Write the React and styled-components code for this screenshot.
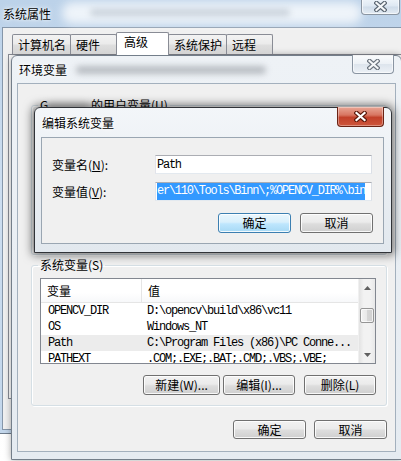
import React from 'react';
import styled, { createGlobalStyle } from 'styled-components';

const CJK = `"Noto Sans CJK SC", "Noto Sans", sans-serif`;
const MONO = `"Liberation Mono", "DejaVu Sans Mono", monospace`;

const GlobalStyle = createGlobalStyle`
  html, body { margin: 0; padding: 0; }
  body { width: 401px; height: 461px; overflow: hidden; background: #fff; }
  *, *::before, *::after { box-sizing: border-box; }
`;

const Desktop = styled.div`
  position: relative;
  width: 401px;
  height: 461px;
  overflow: hidden;
  background: linear-gradient(180deg, #eef1f4 0%, #ffffff 100%);
  font-family: ${CJK};
  font-size: 12px;
  line-height: 14px;
  color: #000;
`;

const Smudge = styled.span`
  position: absolute;
  left: ${p => p.$x}px;
  top: ${p => p.$y}px;
  width: ${p => p.$w}px;
  height: ${p => p.$h}px;
  background: ${p => p.$c};
  border-radius: ${p => p.$h / 2}px;
  filter: blur(${p => p.$b}px);
  opacity: ${p => p.$o};
  pointer-events: none;
`;

/* ---------- outer window: 系统属性 ---------- */
const SysWindow = styled.div`
  position: absolute;
  left: 0;
  top: 0;
  width: 406px;
  height: 434px;
  display: flex;
  flex-direction: column;
  background: linear-gradient(180deg, #bcd2e9 0%, #cddef0 45%, #c2d6eb 100%);
  border-right: 1px solid #6d7c8c;
  border-bottom: 1px solid #6d7c8c;
`;

const TitleBar = styled.div`
  position: relative;
  flex: none;
  height: ${p => p.$h}px;
  display: flex;
  align-items: center;
  padding-left: ${p => p.$pl}px;
`;

const Caption = styled.span`
  position: relative;
  white-space: nowrap;
  text-shadow: 0 0 6px rgba(255, 255, 255, 0.95), 0 0 3px rgba(255, 255, 255, 0.9);
`;

const CaptionButton = styled.div`
  position: absolute;
  top: -1px;
  right: ${p => p.$right}px;
  width: ${p => p.$w}px;
  height: ${p => p.$h}px;
  display: flex;
  align-items: center;
  justify-content: center;
  border: 1px solid ${p => (p.$red ? '#6a2314' : '#8a95a2')};
  border-top: none;
  border-radius: 0 0 4px 4px;
  background: ${p =>
    p.$red
      ? 'linear-gradient(180deg, #e8a695 0%, #d87662 42%, #c2412a 55%, #cd573c 100%)'
      : 'linear-gradient(180deg, rgba(255,255,255,0.75) 0%, rgba(236,241,246,0.7) 48%, rgba(214,223,233,0.7) 52%, rgba(236,241,246,0.8) 100%)'};
  box-shadow: inset 0 0 0 1px rgba(255, 255, 255, ${p => (p.$red ? 0.35 : 0.6)});
`;

const SysClient = styled.div`
  flex: none;
  height: 403px;
  margin-left: 2px;
  border: 1px solid #8596a9;
  border-right: none;
  background: #f0f0f0;
  padding: 4px 0 0 5px;
  display: flex;
  flex-direction: column;
`;

const TabRow = styled.div`
  position: relative;
  z-index: 1;
  flex: none;
  height: 23px;
  margin-bottom: -1px;
  padding-left: 4px;
  display: flex;
  align-items: flex-end;
`;

const Tab = styled.div`
  flex: none;
  position: relative;
  z-index: ${p => (p.$active ? 2 : 1)};
  width: ${p => p.$w}px;
  height: ${p => (p.$active ? 23 : 20)}px;
  margin-left: ${p => p.$ml}px;
  margin-bottom: ${p => (p.$active ? 0 : 1)}px;
  padding: ${p => (p.$active ? '2px 0 0 7px' : '3px 0 0 5px')};
  border: 1px solid #898c95;
  border-bottom: none;
  border-radius: 2px 2px 0 0;
  background: ${p =>
    p.$active
      ? '#ffffff'
      : 'linear-gradient(180deg, #f3f3f3 0%, #ebebeb 45%, #dedede 55%, #d4d4d4 100%)'};
  white-space: nowrap;
`;

const TabPanel = styled.div`
  flex: none;
  height: 345px;
  margin-right: -10px;
  border: 1px solid #898c95;
  background: #ffffff;
`;

/* ---------- 环境变量 window ---------- */
const EnvWindow = styled.div`
  position: absolute;
  left: 11px;
  top: 55px;
  width: 391px;
  height: 405px;
  display: flex;
  flex-direction: column;
  border: 1px solid #737e8a;
  border-radius: 6px 6px 0 0;
  background: linear-gradient(180deg, #eef2f6 0%, #e5ebf1 100%);
  box-shadow: 0 0 7px rgba(0, 0, 0, 0.35);
`;

const EnvClient = styled.div`
  flex: none;
  height: 369px;
  margin: 0 5px;
  border: 1px solid #a3b0bd;
  background: #f0f0f0;
  padding: 14px 8px 0 13px;
  display: flex;
  flex-direction: column;
`;

const Group = styled.fieldset`
  flex: none;
  margin: ${p => p.$mt}px 0 0 0;
  padding: ${p => p.$pt}px 10px 10px 8px;
  min-width: 0;
  height: ${p => (p.$h ? `${p.$h}px` : 'auto')};
  border: 1px solid #d5dfe5;
  border-radius: 3px;
  box-shadow: inset 1px 1px 0 #ffffff, 1px 1px 0 #ffffff;
`;

const Legend = styled.legend`
  padding: 0 2px;
  margin-left: -2px;
  line-height: 14px;
  white-space: nowrap;
`;

const Hidden = styled.span`
  display: inline-block;
  width: 40px;
  height: 10px;
  vertical-align: middle;
  background: #b8b8b8;
  filter: blur(3px);
  opacity: 0.6;
`;

const GroupBody = styled.div`
  display: flex;
  flex-direction: column;
`;

const ListBox = styled.div`
  flex: none;
  height: 86px;
  border: 1px solid #828790;
  background: #ffffff;
  display: flex;
  overflow: hidden;
`;

const ListMain = styled.div`
  flex: 1;
  min-width: 0;
  display: flex;
  flex-direction: column;
  overflow: hidden;
`;

const HeaderRow = styled.div`
  flex: none;
  height: 24px;
  display: grid;
  grid-template-columns: 101px 1fr;
  border-bottom: 1px solid #e5e5e5;
  background: linear-gradient(180deg, #ffffff 0%, #ffffff 60%, #f7f8fa 100%);
`;

const HeaderCell = styled.div`
  display: flex;
  align-items: center;
  padding-left: 6px;
  border-right: ${p => (p.$sep ? '1px solid #e5e5e5' : 'none')};
`;

const Row = styled.div`
  flex: none;
  height: 16px;
  display: grid;
  grid-template-columns: 101px 1fr;
  background: ${p => (p.$sel ? '#ececec' : 'transparent')};
  font-family: ${MONO};
  font-size: 12px;
  letter-spacing: -1.2px;
  line-height: 16px;
  white-space: nowrap;
`;

const Cell = styled.div`
  padding-left: ${p => p.$pl}px;
  overflow: hidden;
`;

const ScrollBar = styled.div`
  flex: none;
  width: 17px;
  display: flex;
  flex-direction: column;
  background: linear-gradient(90deg, #e3e3e3 0%, #f2f2f2 30%, #f2f2f2 70%, #e8e8e8 100%);
  border-left: 1px solid #f0f0f0;
`;

const ScrollArrow = styled.div`
  flex: none;
  height: 17px;
  display: flex;
  align-items: center;
  justify-content: center;
`;

const ScrollTrack = styled.div`
  flex: 1;
  padding-top: 12px;
`;

const Thumb = styled.div`
  height: 15px;
  margin: 0 1px;
  border: 1px solid #959595;
  border-radius: 2px;
  background: linear-gradient(90deg, #f3f3f3 0%, #e8e8e8 50%, #d6d6d6 51%, #d0d0d0 100%);
  box-shadow: inset 0 0 0 1px rgba(255, 255, 255, 0.7);
`;

const ButtonRow = styled.div`
  flex: none;
  display: flex;
  justify-content: flex-end;
  margin-top: ${p => p.$mt}px;
`;

const Button = styled.div`
  flex: none;
  width: ${p => p.$w}px;
  height: ${p => p.$h}px;
  margin-left: ${p => p.$ml || 0}px;
  display: flex;
  align-items: center;
  justify-content: center;
  border: 1px solid ${p => (p.$default ? '#3c7fb1' : '#707070')};
  border-radius: 3px;
  background: ${p =>
    p.$default
      ? 'linear-gradient(180deg, #eaf6fd 0%, #d9f0fc 45%, #bee6fd 55%, #a7d9f5 100%)'
      : 'linear-gradient(180deg, #f2f2f2 0%, #ebebeb 45%, #dddddd 55%, #cfcfcf 100%)'};
  box-shadow: inset 0 0 0 1px rgba(255, 255, 255, 0.85);
  white-space: nowrap;
`;

/* ---------- 编辑系统变量 dialog ---------- */
const EditDialog = styled.div`
  position: absolute;
  left: 34px;
  top: 107px;
  width: 358px;
  height: 146px;
  display: flex;
  flex-direction: column;
  border: 1px solid #303338;
  border-radius: 6px 6px 0 0;
  background: linear-gradient(180deg, #f3f6f9 0%, #e8edf2 60%, #e2e8ee 100%);
  box-shadow: 0 0 10px 2px rgba(0, 0, 0, 0.55);
`;

const DlgClient = styled.div`
  flex: none;
  height: 107px;
  margin: 0 7px 0 6px;
  border: 1px solid #9aa6b2;
  background: #f0f0f0;
  padding: 17px 10px 0 10px;
  display: flex;
  flex-direction: column;
`;

const FieldRow = styled.div`
  flex: none;
  display: flex;
  align-items: center;
  height: 19px;
  margin-top: ${p => p.$mt}px;
`;

const FieldLabel = styled.div`
  flex: none;
  width: 103px;
  white-space: nowrap;
`;

const Key = styled.span`
  text-decoration: underline;
`;

const TextBox = styled.div`
  flex: none;
  width: 217px;
  height: 19px;
  border: 1px solid;
  border-color: #abadb3 #dbdfe6 #e3e9ef #e2e3ea;
  background: #ffffff;
  padding: 0 0 0 1px;
  display: flex;
  align-items: center;
  overflow: hidden;
  font-family: ${MONO};
  font-size: 12px;
  letter-spacing: -1.25px;
  white-space: nowrap;
`;

const Selection = styled.span`
  background: #3399ff;
  color: #ffffff;
  line-height: 17px;
`;

const CloseGlyph = ({ fill, edge }) => (
  <svg width="13" height="11" viewBox="0 0 13 11">
    <path d="M2.5 2 L10.5 9 M10.5 2 L2.5 9" stroke={edge} strokeWidth="4.4" strokeLinecap="square" fill="none" />
    <path d="M2.5 2 L10.5 9 M10.5 2 L2.5 9" stroke={fill} strokeWidth="2.2" strokeLinecap="square" fill="none" />
  </svg>
);

const Arrow = ({ down }) => (
  <svg width="7" height="4" viewBox="0 0 7 4">
    <path d={down ? 'M0 0 L7 0 L3.5 4 Z' : 'M0 4 L7 4 L3.5 0 Z'} fill="#606060" />
  </svg>
);

const sysRows = [
  ['OPENCV_DIR', 'D:\\opencv\\build\\x86\\vc11'],
  ['OS', 'Windows_NT'],
  ['Path', 'C:\\Program Files (x86)\\PC Conne...'],
  ['PATHEXT', '.COM;.EXE;.BAT;.CMD;.VBS;.VBE;'],
];

const tabs = [
  { label: '计算机名', w: 59, ml: 0 },
  { label: '硬件', w: 47, ml: -1 },
  { label: '高级', w: 53, ml: -1, active: true },
  { label: '系统保护', w: 59, ml: -1 },
  { label: '远程', w: 47, ml: -1 },
];

function VarList({ rows, selected }) {
  return (
    <ListBox>
      <ListMain>
        <HeaderRow>
          <HeaderCell $sep>变量</HeaderCell>
          <HeaderCell>值</HeaderCell>
        </HeaderRow>
        {rows.map(([name, value]) => (
          <Row key={name} $sel={name === selected}>
            <Cell $pl={7}>{name}</Cell>
            <Cell $pl={5}>{value}</Cell>
          </Row>
        ))}
      </ListMain>
      <ScrollBar>
        <ScrollArrow>
          <Arrow />
        </ScrollArrow>
        <ScrollTrack>
          <Thumb />
        </ScrollTrack>
        <ScrollArrow>
          <Arrow down />
        </ScrollArrow>
      </ScrollBar>
    </ListBox>
  );
}

export default function App() {
  return (
    <Desktop>
      <GlobalStyle />

      <SysWindow>
        <TitleBar $h={27} $pl={3}>
          <Smudge $x={62} $y={2} $w={300} $h={22} $c="#ffffff" $b={5} $o={0.75} />
          <Smudge $x={90} $y={9} $w={200} $h={7} $c="#9aa6b4" $b={3} $o={0.45} />
          <Caption>系统属性</Caption>
          <CaptionButton $right={5} $w={39} $h={16}>
            <CloseGlyph fill="#f4f6f8" edge="#5a6571" />
          </CaptionButton>
        </TitleBar>
        <SysClient>
          <TabRow>
            {tabs.map(t => (
              <Tab key={t.label} $w={t.w} $ml={t.ml} $active={t.active}>
                {t.label}
              </Tab>
            ))}
          </TabRow>
          <TabPanel />
        </SysClient>
      </SysWindow>

      <EnvWindow>
        <TitleBar $h={27} $pl={7}>
          <Smudge $x={64} $y={10} $w={190} $h={8} $c="#8a8f96" $b={3} $o={0.55} />
          <Caption>环境变量</Caption>
          <CaptionButton $right={7} $w={42} $h={19}>
            <CloseGlyph fill="#f4f6f8" edge="#6a737d" />
          </CaptionButton>
        </TitleBar>
        <EnvClient>
          {/* user-variable group: its contents are covered by the edit dialog */}
          <Group $h={157} $mt={0} $pt={8}>
            <Legend>
              G<Hidden /> 的用户变量(U)
            </Legend>
          </Group>

          <Group $mt={3} $pt={6}>
            <Legend>系统变量(S)</Legend>
            <GroupBody>
              <VarList rows={sysRows} selected="Path" />
              <ButtonRow $mt={11}>
                <Button $w={77} $h={20}>新建(W)...</Button>
                <Button $w={72} $h={20} $ml={3}>编辑(I)...</Button>
                <Button $w={72} $h={20} $ml={9}>删除(L)</Button>
              </ButtonRow>
            </GroupBody>
          </Group>

          <ButtonRow $mt={14}>
            <Button $w={73} $h={19}>确定</Button>
            <Button $w={73} $h={19} $ml={8}>取消</Button>
          </ButtonRow>
        </EnvClient>
      </EnvWindow>

      <EditDialog>
        <TitleBar $h={29} $pl={7}>
          <Caption>编辑系统变量</Caption>
          <CaptionButton $red $right={7} $w={47} $h={20}>
            <CloseGlyph fill="#ffffff" edge="#5c1a0c" />
          </CaptionButton>
        </TitleBar>
        <DlgClient>
          <FieldRow $mt={0}>
            <FieldLabel>
              变量名(<Key>N</Key>):
            </FieldLabel>
            <TextBox>Path</TextBox>
          </FieldRow>
          <FieldRow $mt={8}>
            <FieldLabel>
              变量值(<Key>V</Key>):
            </FieldLabel>
            <TextBox>
              <Selection>er\110\Tools\Binn\;%OPENCV_DIR%\bin</Selection>
            </TextBox>
          </FieldRow>
          <ButtonRow $mt={12}>
            <Button $default $w={73} $h={20}>确定</Button>
            <Button $w={73} $h={20} $ml={9}>取消</Button>
          </ButtonRow>
        </DlgClient>
      </EditDialog>
    </Desktop>
  );
}
